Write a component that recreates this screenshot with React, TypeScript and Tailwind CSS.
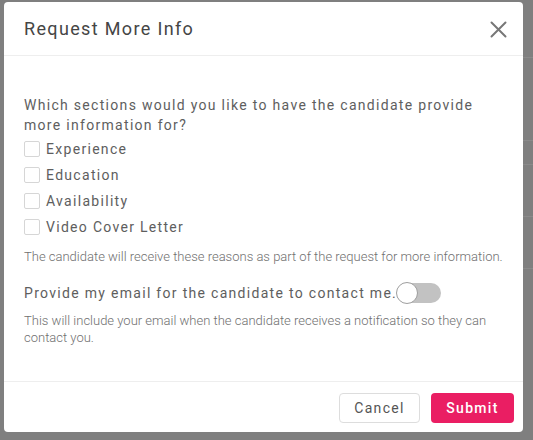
import React from "react";

const font = { fontFamily: "Roboto, 'Noto Sans', sans-serif" };

function Checkbox({ label }: { label: string }) {
  return (
    <label className="flex h-[26px] items-center">
      <span className="h-[16px] w-[16px] rounded-[2px] border border-[#d6d6d6] bg-white" />
      <span className="ml-[6px] text-[14px] tracking-[1.3px] text-[#5e5e5e]">{label}</span>
    </label>
  );
}

export default function App() {
  return (
    <div className="relative h-[440px] w-[533px] overflow-hidden bg-[#7f7f7f]" style={font}>
      <div className="absolute right-0 top-[57px] h-px w-[10px] bg-[#8a8a8a]" />
      <div className="absolute right-0 top-[140px] h-px w-[10px] bg-[#8a8a8a]" />
      <div className="absolute right-0 top-[164px] h-px w-[10px] bg-[#8a8a8a]" />
      <div className="absolute right-0 top-[216px] h-px w-[10px] bg-[#8a8a8a]" />
      <div className="absolute right-0 top-[268px] h-px w-[10px] bg-[#8a8a8a]" />
      <div className="pl-[4px] pt-[2px]">
        <div className="flex h-[430px] w-[519px] flex-col rounded-[4px] bg-white">
          <div className="flex h-[54px] items-center justify-between border-b border-[#eeeeee] pl-[20px] pr-[16px]">
            <h2 className="text-[18px] tracking-[1.35px] text-[#454545]">Request More Info</h2>
            <svg width="17" height="17" viewBox="0 0 17 17" className="mt-[2px]">
              <path d="M1.5 1.5 L15.5 15.5 M15.5 1.5 L1.5 15.5" stroke="#777" strokeWidth="2" strokeLinecap="round" />
            </svg>
          </div>
          <div className="flex-1 px-[20px] pt-[39px]">
            <p className="text-[14px] leading-[20px] tracking-[1.3px] text-[#5e5e5e]">
              Which sections would you like to have the candidate provide more information for?
            </p>
            <div className="mt-[1px] flex flex-col">
              <Checkbox label="Experience" />
              <Checkbox label="Education" />
              <Checkbox label="Availability" />
              <Checkbox label="Video Cover Letter" />
            </div>
            <p className="mt-[8px] text-[13px] font-light leading-[18px] text-[#6f6f6f]">
              The candidate will receive these reasons as part of the request for more information.
            </p>
            <div className="mt-[16px] flex h-[22px] items-center">
              <span className="text-[14px] tracking-[1.3px] text-[#5e5e5e]">Provide my email for the candidate to contact me.</span>
              <span className="relative flex h-[20px] w-[44px] items-center rounded-full bg-[#c2c2c2]">
                <span className="absolute left-[-1px] h-[22px] w-[22px] rounded-full border border-[#9e9e9e] bg-white" />
              </span>
            </div>
            <p className="mt-[8px] text-[13px] font-light leading-[17px] text-[#6f6f6f]">
              This will include your email when the candidate receives a notification so they can contact you.
            </p>
          </div>
          <div className="flex items-center justify-end gap-[11px] border-t border-[#eeeeee] pb-[9px] pl-[20px] pr-[9px] pt-[11px]">
            <button className="h-[30px] w-[81px] rounded-[4px] border border-[#dddddd] bg-white text-[14px] tracking-[1.3px] text-[#555]">
              Cancel
            </button>
            <button className="h-[30px] w-[83px] rounded-[4px] bg-[#ea1e63] text-[14px] font-medium tracking-[1.3px] text-white">
              Submit
            </button>
          </div>
        </div>
      </div>
    </div>
  );
}
